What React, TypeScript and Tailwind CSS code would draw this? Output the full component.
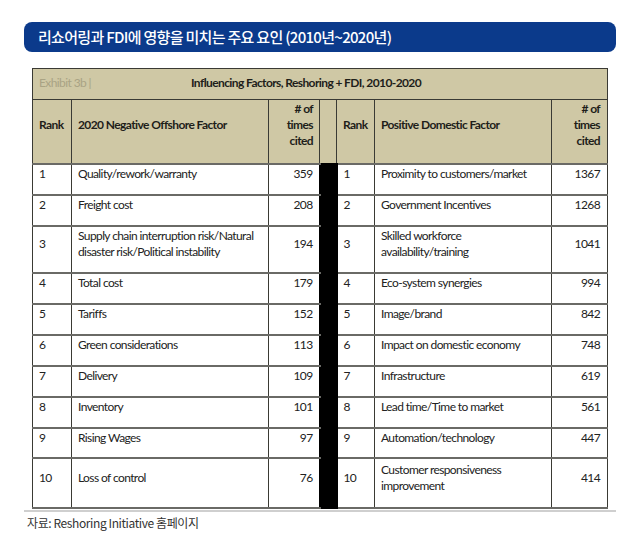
const rows = [
  { rank: 1, neg: ["Quality/rework/warranty"], negN: 359, pos: ["Proximity to customers/market"], posN: 1367, h: "h-[31px]" },
  { rank: 2, neg: ["Freight cost"], negN: 208, pos: ["Government Incentives"], posN: 1268, h: "h-[31px]" },
  {
    rank: 3,
    neg: ["Supply chain interruption risk/Natural", "disaster risk/Political instability"],
    negN: 194,
    pos: ["Skilled workforce", "availability/training"],
    posN: 1041,
    h: "h-[47px]",
  },
  { rank: 4, neg: ["Total cost"], negN: 179, pos: ["Eco-system synergies"], posN: 994, h: "h-[31px]" },
  { rank: 5, neg: ["Tariffs"], negN: 152, pos: ["Image/brand"], posN: 842, h: "h-[31px]" },
  { rank: 6, neg: ["Green considerations"], negN: 113, pos: ["Impact on domestic economy"], posN: 748, h: "h-[31px]" },
  { rank: 7, neg: ["Delivery"], negN: 109, pos: ["Infrastructure"], posN: 619, h: "h-[31px]" },
  { rank: 8, neg: ["Inventory"], negN: 101, pos: ["Lead time/Time to market"], posN: 561, h: "h-[31px]" },
  { rank: 9, neg: ["Rising Wages"], negN: 97, pos: ["Automation/technology"], posN: 447, h: "h-[30px]" },
  {
    rank: 10,
    neg: ["Loss of control"],
    negN: 76,
    pos: ["Customer responsiveness", "improvement"],
    posN: 414,
    h: "h-[50px]",
  },
]

const cell = "border-x border-x-[#3a3a34] border-y-2 border-y-[#6a6a66] px-[6px] pb-[10px] align-middle"
const head = "border border-[#3a3a34] px-[6px] pb-[12px]"

export default function App() {
  return (
    <div className="h-[552px] w-[640px] overflow-hidden bg-white pt-[22px] font-['Lato',sans-serif] text-[12px] leading-[16px] tracking-[-0.6px] text-[#222]">
      <div className="mx-[24px] flex h-[30px] items-center rounded-[8px] bg-[#0b3a8b] px-[14px]">
        <h1 className="font-['Noto_Sans_CJK_KR',sans-serif] text-[15px] font-medium tracking-[-0.7px] text-white">
          리쇼어링과 FDI에 영향을 미치는 주요 요인 (2010년~2020년)
        </h1>
      </div>

      <div className="ml-[32px] mt-[16px] w-[575px]">
        <table className="w-full table-fixed border-collapse">
          <colgroup>
            <col className="w-[39px]" />
            <col className="w-[197px]" />
            <col className="w-[51px]" />
            <col className="w-[17px]" />
            <col className="w-[38px]" />
            <col className="w-[177px]" />
            <col className="w-[56px]" />
          </colgroup>
          <thead className="bg-[#cfc8a5]">
            <tr className="h-[31px]">
              <th colSpan={7} className="border border-[#3a3a34] px-[6px] pb-[2px] text-left font-normal">
                <div className="flex items-center">
                  <span className="w-[152px] text-[#a9a384]">Exhibit 3b |</span>
                  <span className="font-bold text-[#1e1e1a]">Influencing Factors, Reshoring + FDI, 2010-2020</span>
                </div>
              </th>
            </tr>
            <tr className="h-[64px] font-bold text-[#1e1e1a]">
              <th className={`${head} text-left`}>Rank</th>
              <th className={`${head} text-left`}>2020 Negative Offshore Factor</th>
              <th className={`${head} text-right`}>
                # of
                <br />
                times
                <br />
                cited
              </th>
              <th className="border border-[#3a3a34]" />
              <th className={`${head} text-left`}>Rank</th>
              <th className={`${head} text-left`}>Positive Domestic Factor</th>
              <th className={`${head} pr-[7px] text-right`}>
                # of
                <br />
                times
                <br />
                cited
              </th>
            </tr>
          </thead>
          <tbody>
            {rows.map((r) => (
              <tr key={r.rank} className={r.h}>
                <td className={cell}>{r.rank}</td>
                <td className={cell}>
                  {r.neg.map((line) => (
                    <div key={line} className="whitespace-nowrap">
                      {line}
                    </div>
                  ))}
                </td>
                <td className={`${cell} text-right`}>{r.negN}</td>
                <td className="border-2 border-black bg-black" />
                <td className={cell}>{r.rank}</td>
                <td className={cell}>
                  {r.pos.map((line) => (
                    <div key={line} className="whitespace-nowrap">
                      {line}
                    </div>
                  ))}
                </td>
                <td className={`${cell} pr-[7px] text-right`}>{r.posN}</td>
              </tr>
            ))}
          </tbody>
        </table>
      </div>

      <div className="mx-[24px] mt-[1px] border-t-2 border-[#cfcfcf] pt-[3px]">
        <p className="pl-[3px] font-['Noto_Sans_CJK_KR',sans-serif] text-[12px] tracking-[-0.4px] text-[#333]">
          자료: Reshoring Initiative 홈페이지
        </p>
      </div>
    </div>
  )
}
